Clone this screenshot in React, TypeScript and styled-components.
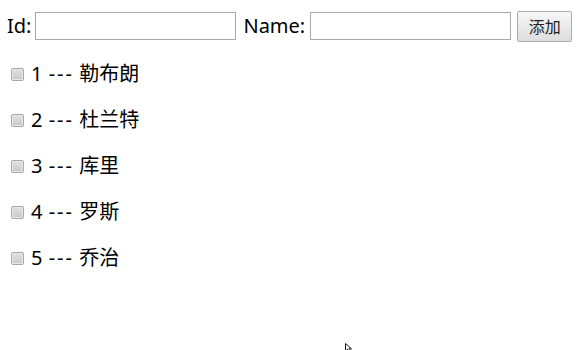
import React, { useState } from "react";
import styled, { createGlobalStyle } from "styled-components";

const Global = createGlobalStyle`
  html, body { margin: 0; padding: 0; background: #fff; }
  body {
    padding: 8px 8px;
    font-family: "Noto Sans", "Noto Sans CJK SC", sans-serif;
    font-size: 20px;
    color: #000;
    height: 334px;
    overflow: hidden;
    position: relative;
  }
`;

const Form = styled.div`
  display: flex;
  align-items: center;
  height: 32px;
  margin-top: 2px;
`;

const Label = styled.label`
  font-size: 20px;
  line-height: 28px;
  margin-left: -1px;
  margin-right: 4px;
  &:not(:first-child) { margin-left: 7px; margin-right: 5px; }
`;

const TextInput = styled.input`
  box-sizing: border-box;
  width: 201px;
  height: 28px;
  border: 1px solid #a9a9a9;
  padding: 2px 4px;
  font-size: 16px;
  outline: none;
  margin: 0;
`;

const AddButton = styled.button`
  box-sizing: border-box;
  width: 55px;
  height: 31px;
  margin-left: 6px;
  border: 1px solid #adadad;
  border-radius: 2px;
  background: linear-gradient(#f6f6f6, #dddddd);
  font-family: "Noto Sans CJK SC", sans-serif;
  font-size: 16px;
  color: #222;
  padding: 0;
`;

const List = styled.div`
  display: flex;
  flex-direction: column;
  gap: 18px;
  margin-top: 18px;
`;

const Row = styled.div`
  display: flex;
  align-items: center;
  height: 28px;
  font-size: 20px;
`;

const Check = styled.input.attrs({ type: "checkbox" })`
  appearance: none;
  box-sizing: border-box;
  width: 13px;
  height: 13px;
  margin: 0 7px 0 3px;
  border: 1px solid #a8a8a8;
  border-radius: 2px;
  background: linear-gradient(#e2e2e2, #c8c8c8);
  box-shadow: inset 0 0 0 1px #e8e8e8;
  &:checked { background: #5a8fd6; }
`;

const Text = styled.span`
  line-height: 28px;
`;

const Dash = styled.span`
  letter-spacing: 2px;
  margin-left: 1px;
`;

const Cursor = styled.svg`
  position: absolute;
  left: 345px;
  top: 343px;
  width: 8px;
  height: 10px;
  pointer-events: none;
`;

const people = [
  { id: 1, name: "勒布朗" },
  { id: 2, name: "杜兰特" },
  { id: 3, name: "库里" },
  { id: 4, name: "罗斯" },
  { id: 5, name: "乔治" },
];

export default function App() {
  const [list] = useState(people);
  return (
    <>
      <Global />
      <Form>
        <Label>Id:</Label>
        <TextInput />
        <Label>Name:</Label>
        <TextInput />
        <AddButton>添加</AddButton>
      </Form>
      <List>
        {list.map((p) => (
          <Row key={p.id}>
            <Check />
            <Text>
              {p.id} <Dash>---</Dash> {p.name}
            </Text>
          </Row>
        ))}
      </List>
      <Cursor viewBox="0 0 8 10">
        <path d="M0.5 0.5 L0.5 8 L2.5 6.2 L4 9.5 L5.3 9 L3.9 5.8 L6.5 5.8 Z" fill="#fff" stroke="#000" strokeWidth="0.9" />
      </Cursor>
    </>
  );
}
